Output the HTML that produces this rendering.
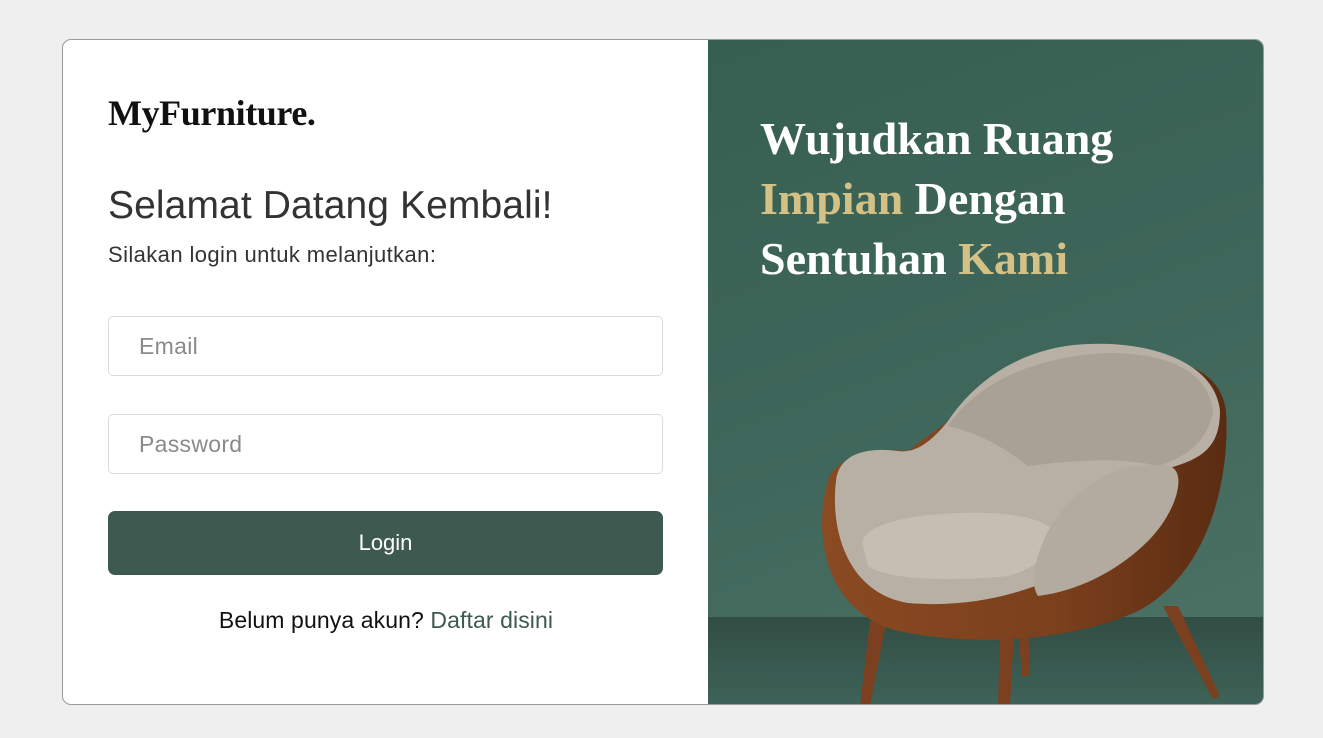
<!DOCTYPE html>
<html><head><meta charset="utf-8"><style>
*{margin:0;padding:0;box-sizing:border-box}
body{width:1323px;height:738px;background:#efefef;position:relative;overflow:hidden;font-family:"Liberation Sans",sans-serif}
.card{position:absolute;left:62px;top:39px;width:1202px;height:666px;border:1px solid #9a9a9a;border-radius:9px;overflow:hidden;background:#fff}
.left{position:absolute;left:0;top:0;width:645px;height:100%}
.right{position:absolute;left:645px;top:0;width:557px;height:100%;background:linear-gradient(160deg,#365f51 0%,#3f665a 50%,#4b7064 90%)}
.logo{position:absolute;left:45px;top:52px;font-family:"Liberation Serif",serif;font-weight:bold;font-size:36px;color:#111;letter-spacing:-0.4px}
h1{position:absolute;left:45px;top:144px;font-weight:normal;font-size:39px;color:#333;letter-spacing:0.1px}
.sub{position:absolute;left:45px;top:202px;font-size:22px;color:#333;letter-spacing:0.4px}
.inp{position:absolute;left:45px;width:555px;height:60px;border:1px solid #dcdcdc;border-radius:5px;font-size:23px;color:#8a8a8a;padding:16px 0 0 30px;letter-spacing:0.3px}
.btn{position:absolute;left:45px;top:471px;width:555px;height:64px;background:#3d5950;border-radius:7px;color:#fff;font-size:22px;text-align:center;line-height:64px}
.reg{position:absolute;left:0;width:646px;top:567px;text-align:center;font-size:23px;color:#111;letter-spacing:0.1px}
.reg span{color:#3d5950}
.head{position:absolute;left:52px;top:69px;font-family:"Liberation Serif",serif;font-weight:bold;font-size:46px;line-height:60px;color:#fff}
.g{color:#d4c185}
.floor{position:absolute;left:0;top:577px;width:100%;height:89px;background:linear-gradient(#314d44,#3e6358)}
</style></head><body>
<div class="card">
<div class="left">
<div class="logo">MyFurniture.</div>
<h1>Selamat Datang Kembali!</h1>
<div class="sub">Silakan login untuk melanjutkan:</div>
<div class="inp" style="top:276px">Email</div>
<div class="inp" style="top:374px">Password</div>
<div class="btn">Login</div>
<div class="reg">Belum punya akun? <span>Daftar disini</span></div>
</div>
<div class="right">
<div class="floor"></div>
<div class="head">Wujudkan Ruang<br><span class="g">Impian</span> Dengan<br>Sentuhan <span class="g">Kami</span></div>
<svg style="position:absolute;left:0;top:291px" width="556" height="375" viewBox="0 0 556 375">
<defs>
<linearGradient id="w" x1="0" y1="0" x2="1" y2="0"><stop offset="0" stop-color="#8a4a22"/><stop offset=".6" stop-color="#7a3f1c"/><stop offset="1" stop-color="#5a2c12"/></linearGradient>
</defs>
<g fill="#7a4020">
<polygon points="162,290 178,292 162,375 152,375"/>
<polygon points="292,300 306,300 302,375 290,375"/>
<polygon points="455,275 470,275 512,365 505,368"/>
<polygon points="310,295 320,295 322,345 314,345"/>
</g>
<path d="M120,150 C105,200 115,280 190,300 C260,315 360,312 430,280 C505,240 522,140 518,80 C512,30 450,20 380,25 C330,30 270,50 240,90 L200,120 C160,115 125,130 120,150Z" fill="url(#w)"/>
<path d="M128,150 C122,200 140,262 200,272 C260,277 320,265 380,230 C410,210 420,160 450,140 C490,130 512,120 512,80 C507,30 440,10 380,13 C320,15 270,45 240,90 C220,115 205,122 190,120 C150,115 130,128 128,150Z" fill="#b8b0a5"/>
<path d="M240,95 C270,50 330,25 400,22 C460,22 500,40 505,80 C500,110 480,125 450,135 C410,125 360,130 320,135 C300,120 280,105 240,95Z" fill="#a9a196"/>
<path d="M155,215 C150,200 180,185 250,182 C310,180 345,190 348,205 C345,225 320,240 300,245 C250,250 180,250 160,235Z" fill="#c5beb3"/>
<path d="M340,200 C370,150 410,130 460,135 C480,138 470,180 440,210 C410,240 370,260 330,265 C320,250 330,220 340,200Z" fill="#b3ab9f"/>
</svg>
</div>
</div>
</body></html>
